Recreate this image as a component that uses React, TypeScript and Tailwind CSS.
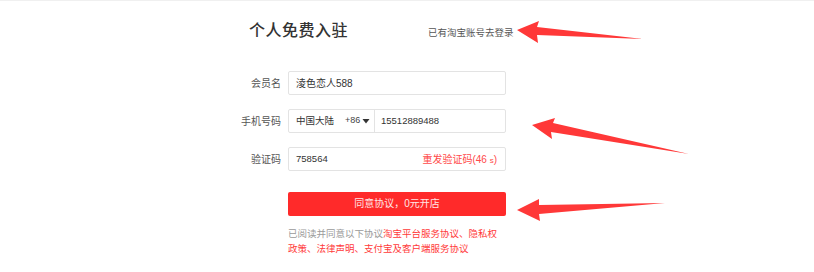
export default function App() {
  const font = { fontFamily: '"Liberation Sans", "Noto Sans CJK SC", sans-serif' };

  return (
    <div className="relative w-[814px] h-[272px] bg-white border-t border-[#f0f0f0] overflow-hidden" style={font}>
      <div className="pl-[236px] pt-[17px]">
        {/* header */}
        <div className="flex items-end h-[24px]">
          <h1
            className="ml-[13px] text-[16px] leading-[22px] font-medium text-[#333] tracking-[0.5px]"
            style={{ fontFamily: '"Liberation Serif", "Noto Sans CJK SC", serif' }}
          >
            个人免费入驻
          </h1>
          <a className="ml-[80px] mb-[3px] text-[9.5px] leading-[12px] text-[#555]">已有淘宝账号去登录</a>
        </div>

        {/* form */}
        <div className="mt-[29px] flex flex-col gap-[14px]">
          <div className="flex items-center">
            <label className="w-[45px] text-right text-[10px] text-[#555]">会员名</label>
            <div className="ml-[7px] w-[218px] h-[24px] border border-[#e3e3e3] rounded-[2px] flex items-center px-[7px] text-[10px] text-[#333]">
              淩色恋人588
            </div>
          </div>

          <div className="flex items-center">
            <label className="w-[45px] text-right text-[10px] text-[#555]">手机号码</label>
            <div className="ml-[7px] w-[218px] h-[24px] border border-[#e3e3e3] rounded-[2px] flex items-stretch text-[10px] text-[#333]">
              <div className="w-[86px] shrink-0 flex items-center whitespace-nowrap border-r border-[#e3e3e3] pl-[7px]">
                <span className="text-[9.5px]">中国大陆</span>
                <span className="ml-[11px] text-[9px] text-[#444]">+86</span>
                <svg width="8" height="6" viewBox="0 0 8 6" className="ml-[2px] shrink-0">
                  <path d="M0.5 1 L7.5 1 L4 5.5 Z" fill="#333" />
                </svg>
              </div>
              <div className="flex items-center pl-[6px] text-[9.5px]">15512889488</div>
            </div>
          </div>

          <div className="flex items-center">
            <label className="w-[45px] text-right text-[10px] text-[#555]">验证码</label>
            <div className="ml-[7px] w-[218px] h-[24px] border border-[#e3e3e3] rounded-[2px] flex items-center justify-between pl-[7px] pr-[8px] text-[#333]">
              <span className="text-[9.5px]">758564</span>
              <span className="text-[10px] text-[#ff4a4a]">
                重发验证码(46 <span className="text-[8px]">s</span>)
              </span>
            </div>
          </div>
        </div>

        {/* submit */}
        <div className="ml-[52px] mt-[19px] w-[218px]">
          <button className="w-full h-[24px] bg-[#ff2a2a] rounded-[2px] text-[10px] text-[#ffe6e6]">
            同意协议，0元开店
          </button>
          <div className="mt-[10px] text-[9.5px] leading-[15px] whitespace-nowrap">
            <div className="flex">
              <span className="text-[#9a9a9a]">已阅读并同意以下协议</span>
              <span className="text-[#ff3a3a]">淘宝平台服务协议、隐私权</span>
            </div>
            <div className="text-[#ff3a3a]">政策、法律声明、支付宝及客户端服务协议</div>
          </div>
        </div>
      </div>

      {/* annotation arrows */}
      <svg className="absolute left-0 top-0 pointer-events-none" width="814" height="272" viewBox="0 0 814 272">
        <path d="M517 29 L539 20 L537 26 L643 38 L537 34 L538 42 Z" fill="#ff3838" />
        <path d="M532 124 L555 117 L553 122 L689 153 L551 131 L552 138 Z" fill="#ff3838" />
        <path d="M517 209 L539 198 L539 204 L665 202 L539 213 L540 220 Z" fill="#ff3838" />
      </svg>
    </div>
  );
}
